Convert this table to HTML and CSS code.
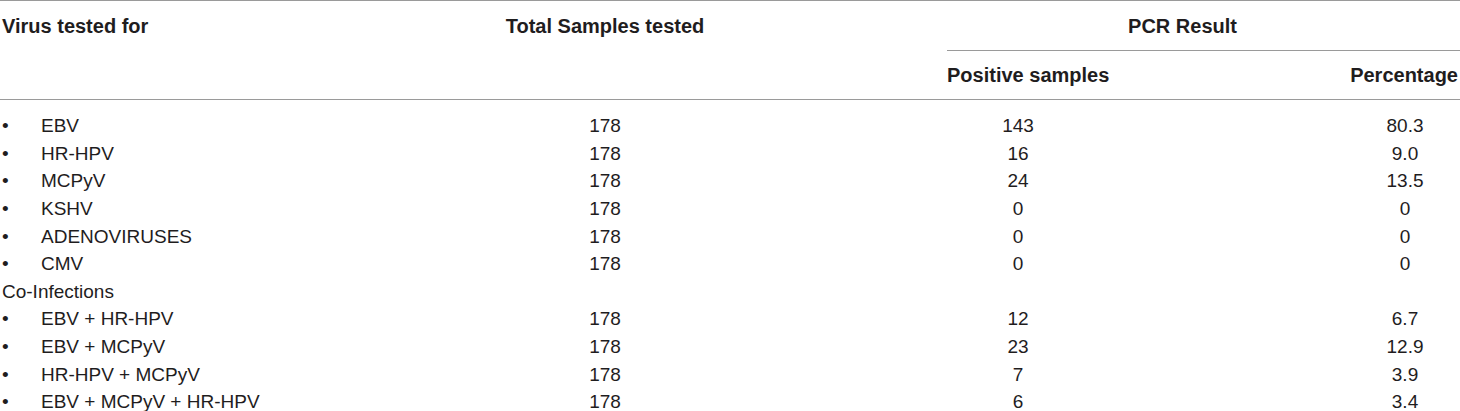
FILE: index.html
```
<!DOCTYPE html>
<html>
<head>
<meta charset="utf-8">
<link rel="stylesheet" href="styles.css">
</head>
<body>
<table class="vt">
  <colgroup>
    <col class="c1"><col class="c2"><col class="c3"><col class="c4">
  </colgroup>
  <thead>
    <tr class="h1">
      <th class="virus" rowspan="2">Virus tested for</th>
      <th class="total" rowspan="2">Total Samples tested</th>
      <th class="pcr" colspan="2">PCR Result</th>
    </tr>
    <tr class="h2">
      <th class="pos">Positive samples</th>
      <th class="pct">Percentage</th>
    </tr>
  </thead>
  <tbody>
    <tr class="first"><td><span class="b">•</span>EBV</td><td class="n">178</td><td class="p">143</td><td class="q">80.3</td></tr>
    <tr><td><span class="b">•</span>HR-HPV</td><td class="n">178</td><td class="p">16</td><td class="q">9.0</td></tr>
    <tr><td><span class="b">•</span>MCPyV</td><td class="n">178</td><td class="p">24</td><td class="q">13.5</td></tr>
    <tr><td><span class="b">•</span>KSHV</td><td class="n">178</td><td class="p">0</td><td class="q">0</td></tr>
    <tr><td><span class="b">•</span>ADENOVIRUSES</td><td class="n">178</td><td class="p">0</td><td class="q">0</td></tr>
    <tr><td><span class="b">•</span>CMV</td><td class="n">178</td><td class="p">0</td><td class="q">0</td></tr>
    <tr><td>Co-Infections</td><td class="n"></td><td class="p"></td><td class="q"></td></tr>
    <tr><td><span class="b">•</span>EBV + HR-HPV</td><td class="n">178</td><td class="p">12</td><td class="q">6.7</td></tr>
    <tr><td><span class="b">•</span>EBV + MCPyV</td><td class="n">178</td><td class="p">23</td><td class="q">12.9</td></tr>
    <tr><td><span class="b">•</span>HR-HPV + MCPyV</td><td class="n">178</td><td class="p">7</td><td class="q">3.9</td></tr>
    <tr><td><span class="b">•</span>EBV + MCPyV + HR-HPV</td><td class="n">178</td><td class="p">6</td><td class="q">3.4</td></tr>
  </tbody>
</table>
</body>
</html>
```
FILE: styles.css
```
html, body {
  margin: 0;
  padding: 0;
  background: #ffffff;
}
body {
  font-family: "Liberation Sans", Arial, sans-serif;
  color: #1f1d1e;
  font-size: 19px;
}
.vt {
  width: 1460px;
  border-collapse: separate;
  border-spacing: 0;
  table-layout: fixed;
}
.c1 { width: 263px; }
.c2 { width: 684px; }
.c3 { width: 403px; }
.c4 { width: 110px; }
th, td {
  padding: 0;
  line-height: 27.6px;
  white-space: nowrap;
  vertical-align: top;
}
th {
  font-weight: bold;
  font-size: 20px;
}
.h1 th {
  border-top: 1px solid #9a9a9a;
  padding-top: 12px;
}
.virus { text-align: left; padding-left: 2px; border-bottom: 1px solid #9a9a9a; }
.total { text-align: center; border-bottom: 1px solid #9a9a9a; }
.pcr {
  text-align: center;
  padding-right: 42px;
  padding-bottom: 9px;
  border-bottom: 1px solid #9a9a9a;
}
.h2 th {
  padding-top: 11px;
  padding-bottom: 10px;
  border-bottom: 1px solid #9a9a9a;
}
.pos { text-align: left; }
.pct { text-align: right; padding-right: 2px; }
.first td { padding-top: 12px; }
td { font-weight: normal; }
td:first-child { padding-left: 2px; }
.b {
  display: inline-block;
  width: 39px;
}
.n { text-align: center; }
.p { text-align: center; padding-right: 261px; }
.q { text-align: center; }
```
